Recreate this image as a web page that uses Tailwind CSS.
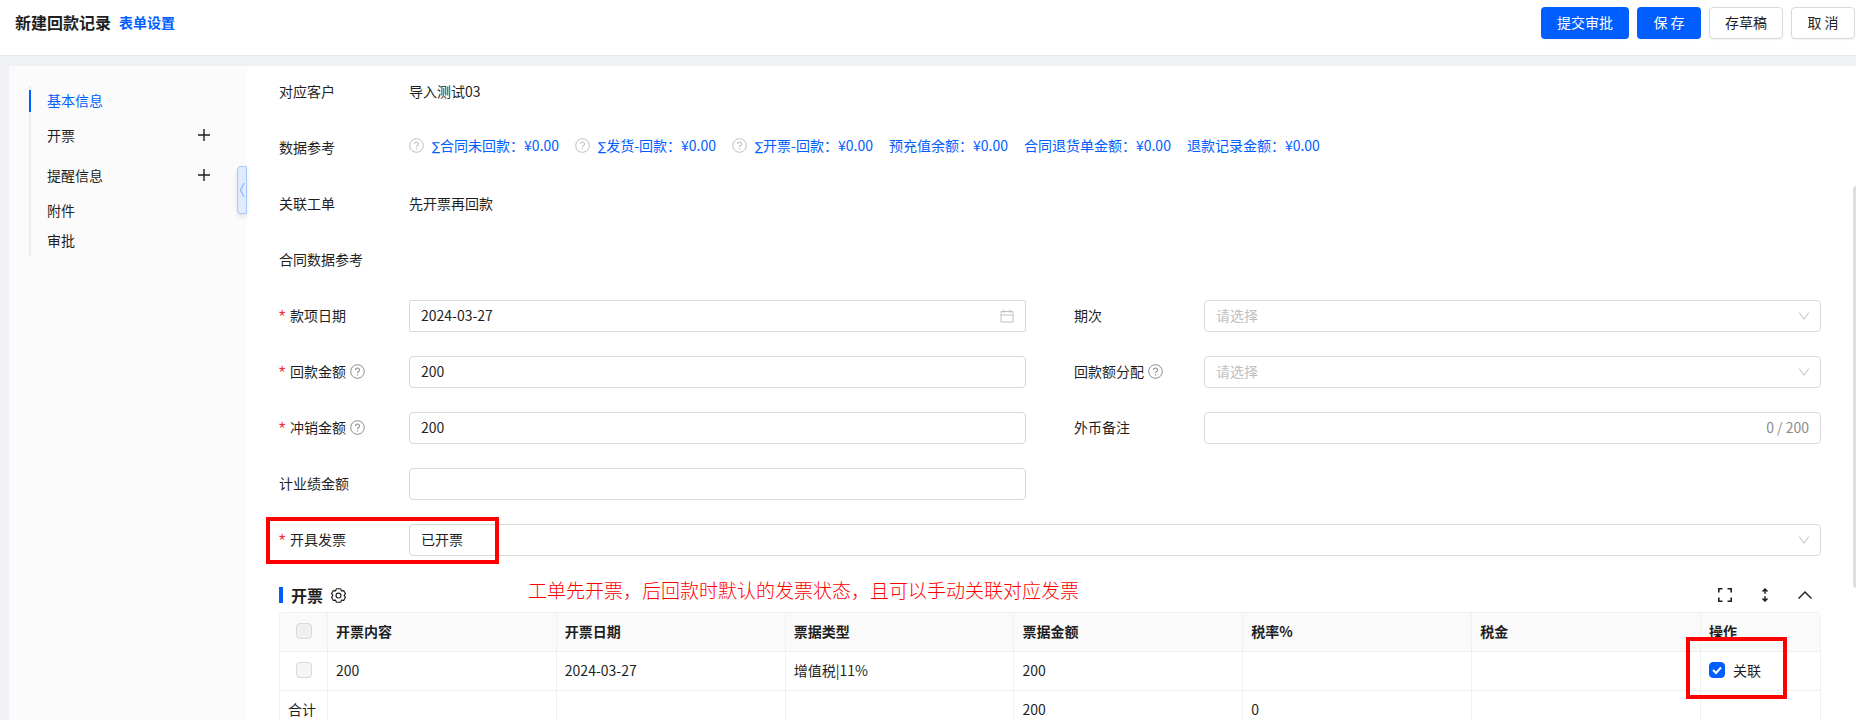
<!DOCTYPE html>
<html lang="zh-CN">
<head>
  <meta charset="UTF-8">
  <meta name="viewport" content="width=device-width, initial-scale=1.0">
  <title>新建回款记录</title>
  <script src="https://cdn.jsdelivr.net/npm/@tailwindcss/browser@4"></script>
</head>
<body class="flex h-screen flex-col overflow-hidden bg-[#f0f1f5] font-['Noto_Sans_CJK_SC',sans-serif] text-sm text-[#1f1f1f]">
  <svg class="hidden">
    <symbol id="question" viewBox="0 0 15 15" fill="none" stroke="currentColor">
      <circle cx="7.5" cy="7.5" r="6.8"/>
      <path d="M5.5 6a2 2 0 1 1 3 1.7c-.7.4-1 .7-1 1.4" stroke-width="1.1"/>
      <path d="M7.5 10.2v1.2" stroke-width="1.2"/>
    </symbol>
    <symbol id="down" viewBox="0 0 12 12" fill="none" stroke="currentColor">
      <path d="M1.2 2.5 6 9.2l4.8-6.7"/>
    </symbol>
    <symbol id="plus" viewBox="0 0 14 14" stroke="currentColor" stroke-width="1.4">
      <path d="M7 1v12M1 7h12"/>
    </symbol>
  </svg>

  <header class="flex shrink-0 items-start justify-between border-b border-[#e5e6e8] bg-white pt-[7px] pr-px pb-4 pl-[15px]">
    <div class="flex h-8 items-center gap-2 pb-0.5">
      <h1 class="text-base font-bold">新建回款记录</h1>
      <a href="#" class="font-bold text-[#005eff]">表单设置</a>
    </div>
    <div class="flex gap-2">
      <button class="h-8 w-[88px] rounded bg-[#005eff] pb-0.5 text-white shadow-xs">提交审批</button>
      <button class="h-8 w-16 rounded bg-[#005eff] pb-0.5 text-white shadow-xs">保 存</button>
      <button class="h-8 w-[74px] rounded border border-[#d9d9d9] bg-white pb-0.5 shadow-xs">存草稿</button>
      <button class="h-8 w-16 rounded border border-[#d9d9d9] bg-white pb-0.5 shadow-xs">取 消</button>
    </div>
  </header>

  <div class="mt-2.5 ml-[9px] flex min-h-0 flex-1">
    <!-- section anchors -->
    <aside class="relative z-10 w-[238px] shrink-0 bg-[#fbfbfb] pt-5 pl-5">
      <nav class="relative border-l-2 border-[#ececec] pr-9 pl-4">
        <span class="absolute top-1 -left-0.5 h-[22px] w-0.5 bg-[#005eff]"></span>
        <a href="#" class="flex h-[30px] items-center pb-0.5 text-[#005eff]">基本信息</a>
        <div class="flex h-10 items-center justify-between pb-0.5">
          <a href="#">开票</a>
          <button aria-label="添加开票"><svg class="size-3.5"><use href="#plus"/></svg></button>
        </div>
        <div class="flex h-10 items-center justify-between pb-0.5">
          <a href="#">提醒信息</a>
          <button aria-label="添加提醒信息"><svg class="size-3.5"><use href="#plus"/></svg></button>
        </div>
        <a href="#" class="flex h-[30px] items-center pb-0.5">附件</a>
        <a href="#" class="flex h-[30px] items-center pb-0.5">审批</a>
      </nav>
      <button aria-label="收起" class="absolute top-[100px] right-0 flex h-12 w-2.5 items-center justify-center rounded-l border border-[#a6c8ff] bg-[#e0ebff] text-[#94bcff] shadow-md">
        <svg class="h-4 w-1.5 shrink-0" viewBox="0 0 6 16" fill="none" stroke="currentColor" stroke-width="1.4"><path d="M5 1 1.5 8 5 15"/></svg>
      </button>
    </aside>

    <main class="relative min-w-0 flex-1 overflow-hidden bg-white pt-2.5 pr-[35px] pl-8">
      <form class="grid grid-cols-2 gap-x-12 gap-y-6">
        <div class="col-span-2 flex h-8 items-center pb-0.5">
          <span class="w-[130px] shrink-0">对应客户</span>
          <span>导入测试03</span>
        </div>

        <div class="col-span-2 flex h-8 items-center pb-0.5">
          <span class="w-[130px] shrink-0">数据参考</span>
          <div class="flex gap-4 pb-1 text-[#005eff]">
            <span class="flex items-center gap-2"><svg class="size-[15px] text-[#bfbfbf]"><use href="#question"/></svg><a href="#"><span class="font-['DejaVu_Sans',sans-serif] text-xs">∑</span>合同未回款：¥0.00</a></span>
            <span class="flex items-center gap-2"><svg class="size-[15px] text-[#bfbfbf]"><use href="#question"/></svg><a href="#"><span class="font-['DejaVu_Sans',sans-serif] text-xs">∑</span>发货-回款：¥0.00</a></span>
            <span class="flex items-center gap-2"><svg class="size-[15px] text-[#bfbfbf]"><use href="#question"/></svg><a href="#"><span class="font-['DejaVu_Sans',sans-serif] text-xs">∑</span>开票-回款：¥0.00</a></span>
            <a href="#">预充值余额：¥0.00</a>
            <a href="#">合同退货单金额：¥0.00</a>
            <a href="#">退款记录金额：¥0.00</a>
          </div>
        </div>

        <div class="col-span-2 flex h-8 items-center pb-0.5">
          <span class="w-[130px] shrink-0">关联工单</span>
          <span>先开票再回款</span>
        </div>

        <div class="col-span-2 flex h-8 items-center pb-0.5">
          <span class="w-[130px] shrink-0">合同数据参考</span>
        </div>

        <div class="flex h-8 items-center">
          <label for="date" class="flex w-[130px] shrink-0 items-center gap-1 pb-0.5"><span class="w-[7px] pt-1 font-['Liberation_Sans',sans-serif] text-base leading-none text-[#f5222d]">*</span>款项日期</label>
          <div class="relative h-8 flex-1">
            <input id="date" type="text" value="2024-03-27" class="h-full w-full rounded-xs border border-[#d9d9d9] px-[11px] pb-0.5">
            <svg class="pointer-events-none absolute top-[9px] right-3 size-3.5 text-[#bfbfbf]" viewBox="0 0 14 14" fill="none" stroke="currentColor"><path d="M1 2.5h12v10.500H1zM1 6h12M4 .5v3.500M10 .5v3.500"/></svg>
          </div>
        </div>
        <div class="flex h-8 items-center">
          <label for="period" class="w-[130px] shrink-0 pb-0.5">期次</label>
          <div class="relative h-8 flex-1">
            <select id="period" class="h-full w-full appearance-none rounded border border-[#d9d9d9] px-[11px] pb-0.5 text-[#bfbfbf]"><option>请选择</option></select>
            <svg class="pointer-events-none absolute top-2.5 right-[11px] size-3 text-[#bfbfbf]"><use href="#down"/></svg>
          </div>
        </div>

        <div class="flex h-8 items-center">
          <label for="amount" class="flex w-[130px] shrink-0 items-center gap-1 pb-0.5"><span class="w-[7px] pt-1 font-['Liberation_Sans',sans-serif] text-base leading-none text-[#f5222d]">*</span>回款金额<svg class="size-[15px] text-[#8c8c8c]"><use href="#question"/></svg></label>
          <input id="amount" type="text" value="200" class="h-8 min-w-0 flex-1 rounded border border-[#d9d9d9] px-[11px] pb-0.5">
        </div>
        <div class="flex h-8 items-center">
          <label for="split" class="flex w-[130px] shrink-0 items-center gap-1 pb-0.5">回款额分配<svg class="size-[15px] text-[#8c8c8c]"><use href="#question"/></svg></label>
          <div class="relative h-8 flex-1">
            <select id="split" class="h-full w-full appearance-none rounded border border-[#d9d9d9] px-[11px] pb-0.5 text-[#bfbfbf]"><option>请选择</option></select>
            <svg class="pointer-events-none absolute top-2.5 right-[11px] size-3 text-[#bfbfbf]"><use href="#down"/></svg>
          </div>
        </div>

        <div class="flex h-8 items-center">
          <label for="offset" class="flex w-[130px] shrink-0 items-center gap-1 pb-0.5"><span class="w-[7px] pt-1 font-['Liberation_Sans',sans-serif] text-base leading-none text-[#f5222d]">*</span>冲销金额<svg class="size-[15px] text-[#8c8c8c]"><use href="#question"/></svg></label>
          <input id="offset" type="text" value="200" class="h-8 min-w-0 flex-1 rounded border border-[#d9d9d9] px-[11px] pb-0.5">
        </div>
        <div class="flex h-8 items-center">
          <label for="remark" class="w-[130px] shrink-0 pb-0.5">外币备注</label>
          <div class="flex h-8 flex-1 items-center rounded border border-[#d9d9d9] px-[11px] pb-0.5">
            <input id="remark" type="text" maxlength="200" class="min-w-0 flex-1">
            <span class="text-[#8c8c8c]">0 / 200</span>
          </div>
        </div>

        <div class="flex h-8 items-center">
          <label for="performance" class="w-[130px] shrink-0 pb-0.5">计业绩金额</label>
          <input id="performance" type="text" class="h-8 min-w-0 flex-1 rounded border border-[#d9d9d9] px-[11px] pb-0.5">
        </div>

        <div class="relative col-span-2 flex h-8 items-center">
          <label for="invoice" class="flex w-[130px] shrink-0 items-center gap-1 pb-0.5"><span class="w-[7px] pt-1 font-['Liberation_Sans',sans-serif] text-base leading-none text-[#f5222d]">*</span>开具发票</label>
          <div class="relative h-8 flex-1">
            <select id="invoice" class="h-full w-full appearance-none rounded border border-[#d9d9d9] px-[11px] pb-0.5"><option>已开票</option></select>
            <svg class="pointer-events-none absolute top-2.5 right-[11px] size-3 text-[#bfbfbf]"><use href="#down"/></svg>
          </div>
          <div class="pointer-events-none absolute -top-[7px] -left-[13px] h-[47px] w-[233px] border-4 border-[#ff0000]"></div>
        </div>
      </form>

      <section class="relative mt-6">
        <div class="flex h-8 items-center justify-between pb-0.5">
          <div class="flex items-center gap-2">
            <span class="h-4 w-1 bg-[#005eff]"></span>
            <h2 class="text-base font-bold">开票</h2>
            <button aria-label="设置"><svg class="size-[15px]" viewBox="0 0 14 14" fill="none" stroke="currentColor" stroke-width="1.1"><path d="M5 .7h4l.8 2 2.1-.3 1.6 2.9L12.300 7l1.200 1.700-1.600 2.900-2.100-.3-.8 2H5l-.8-2-2.100.3L.5 8.700 1.700 7 .5 5.300l1.600-2.900 2.100.3z"/><circle cx="7" cy="7" r="2.300"/></svg></button>
          </div>
          <div class="flex items-center gap-[26px] pr-[9px]">
            <button aria-label="全屏"><svg class="size-3.5" viewBox="0 0 14 14" fill="none" stroke="currentColor" stroke-width="1.600"><path d="M.8 4.500V.8h3.700M9.500.8h3.700v3.700M13.200 9.500v3.700H9.500M4.500 13.200H.8V9.500"/></svg></button>
            <button aria-label="行高"><svg class="size-3.5" viewBox="0 0 14 14" fill="none" stroke="currentColor" stroke-width="1.500"><path d="M7 1v4.800M7 8.200V13M4.500 3.500 7 1l2.500 2.500M4.500 10.500 7 13l2.500-2.500"/></svg></button>
            <button aria-label="折叠"><svg class="size-3.5" viewBox="0 0 14 14" fill="none" stroke="currentColor" stroke-width="1.500"><path d="M.5 10.500 7 4l6.500 6.500"/></svg></button>
          </div>
        </div>
        <p class="absolute -top-1 left-[249px] text-[19px] leading-7 font-light text-[#ff0000]">工单先开票，后回款时默认的发票状态，且可以手动关联对应发票</p>

        <div class="overflow-hidden rounded-t border-t border-l border-[#f0f0f0]">
          <table class="w-full table-fixed border-separate border-spacing-0 text-left [&_td]:h-[39px] [&_td]:border-r [&_td]:border-b [&_td]:border-[#f0f0f0] [&_td]:px-2 [&_td]:pb-0.5 [&_th]:h-[39px] [&_th]:border-r [&_th]:border-b [&_th]:border-[#f0f0f0] [&_th]:bg-[#fafafa] [&_th]:px-2 [&_th]:pb-0.5 [&_th]:font-bold">
            <thead>
              <tr>
                <th class="w-12"><input type="checkbox" disabled aria-label="全选" class="mx-auto block size-4 appearance-none rounded border border-[#d9d9d9] bg-[#f0f0f0]"></th>
                <th>开票内容</th>
                <th>开票日期</th>
                <th>票据类型</th>
                <th>票据金额</th>
                <th>税率%</th>
                <th>税金</th>
                <th class="w-[120px]">操作</th>
              </tr>
            </thead>
            <tbody>
              <tr>
                <td><input type="checkbox" disabled aria-label="选择此行" class="mx-auto block size-4 appearance-none rounded border border-[#d9d9d9] bg-[#f5f5f5]"></td>
                <td>200</td>
                <td>2024-03-27</td>
                <td>增值税|11%</td>
                <td>200</td>
                <td></td>
                <td></td>
                <td>
                  <label class="relative flex items-center gap-2">
                    <input type="checkbox" checked class="size-4 appearance-none rounded border border-[#d9d9d9] checked:border-[#005eff] checked:bg-[#005eff]">
                    <svg class="pointer-events-none absolute left-0 size-4" viewBox="0 0 16 16" fill="none" stroke="#fff" stroke-width="2"><path d="m4 8 3 3 5-5.500"/></svg>
                    关联
                  </label>
                </td>
              </tr>
              <tr>
                <td>合计</td>
                <td></td>
                <td></td>
                <td></td>
                <td>200</td>
                <td>0</td>
                <td></td>
                <td></td>
              </tr>
            </tbody>
          </table>
        </div>
        <div class="pointer-events-none absolute top-[57px] right-[34px] h-[62px] w-[101px] border-4 border-[#ff0000]"></div>
      </section>

      <div class="absolute top-[120px] right-0 h-[402px] w-[3px] rounded-l bg-[#dedede]"></div>
    </main>
  </div>
</body>
</html>
